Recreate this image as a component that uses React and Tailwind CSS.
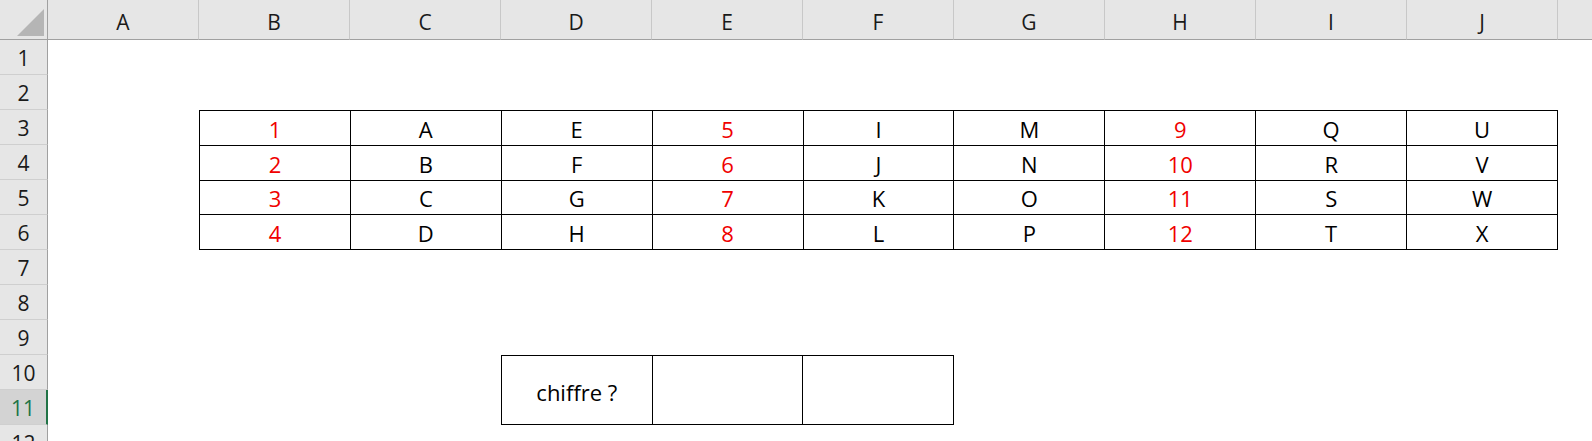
const cols = ['A', 'B', 'C', 'D', 'E', 'F', 'G', 'H', 'I', 'J']
const rows = [1, 2, 3, 4, 5, 6, 7, 8, 9, 10, 11, 12]

// columns B..J of the first table, red ones hold the digits
const table = [
  { red: true, values: ['1', '2', '3', '4'] },
  { values: ['A', 'B', 'C', 'D'] },
  { values: ['E', 'F', 'G', 'H'] },
  { red: true, values: ['5', '6', '7', '8'] },
  { values: ['I', 'J', 'K', 'L'] },
  { values: ['M', 'N', 'O', 'P'] },
  { red: true, values: ['9', '10', '11', '12'] },
  { values: ['Q', 'R', 'S', 'T'] },
  { values: ['U', 'V', 'W', 'X'] },
]

const App = () => {
  return (
    <div className="h-[441px] w-[1592px] overflow-hidden bg-white"
      style={{ fontFamily: '"Open Sans", "Liberation Sans", sans-serif' }}>
      <div className="grid grid-cols-[48px_repeat(10,151px)_1fr] grid-rows-[40px_repeat(12,35px)]">

        {/* Corner */}
        <div className="col-start-1 row-start-1 bg-[#e6e6e6] border-r border-b border-[#a0a0a0] flex items-end justify-end pr-[3px] pb-[3px]">
          <svg width="27" height="27" viewBox="0 0 27 27">
            <polygon points="27,0 27,27 0,27" fill="#b5b5b5" />
          </svg>
        </div>

        {/* Column headers */}
        {cols.map((c, i) => (
          <div key={c}
            className="row-start-1 bg-[#e6e6e6] border-r border-b border-r-[#c8c8c8] border-b-[#a0a0a0] flex items-center justify-center pt-[6px] text-[21px] text-[#1a1a1a]"
            style={{ gridColumnStart: i + 2 }}>
            {c}
          </div>
        ))}
        <div className="col-start-12 row-start-1 bg-[#e6e6e6] border-b border-[#a0a0a0]" />

        {/* Row headers */}
        {rows.map((r) => (
          <div key={r}
            className={`col-start-1 flex items-center justify-center pt-[4px] text-[21px] border-b border-b-[#cfcfcf] ${
              r === 11
                ? 'bg-[#d3d3d3] text-[#217346] border-r-2 border-r-[#217346]'
                : 'bg-[#e6e6e6] text-[#1a1a1a] border-r border-r-[#a0a0a0]'
            }`}
            style={{ gridRowStart: r + 1 }}>
            {r}
          </div>
        ))}

        {/* Table B3:J6 */}
        <div className="col-start-3 col-span-9 row-start-4 row-span-4 grid grid-cols-9 grid-rows-4 border-t border-l border-black text-[22px]">
          {[0, 1, 2, 3].map((r) =>
            table.map((col, c) => (
              <div key={`${r}-${c}`}
                className={`flex items-center justify-center pt-[3px] border-r border-b border-black ${
                  col.red ? 'text-[#f00000]' : 'text-black'
                }`}>
                {col.values[r]}
              </div>
            ))
          )}
        </div>

        {/* Table D10:F11 */}
        <div className="col-start-5 col-span-3 row-start-11 row-span-2 grid grid-cols-3 border-t border-l border-black text-[22px] text-black">
          <div className="flex items-center justify-center pt-[4px] border-r border-b border-black">chiffre ?</div>
          <div className="border-r border-b border-black" />
          <div className="border-r border-b border-black" />
        </div>

      </div>
    </div>
  )
}

export default App
